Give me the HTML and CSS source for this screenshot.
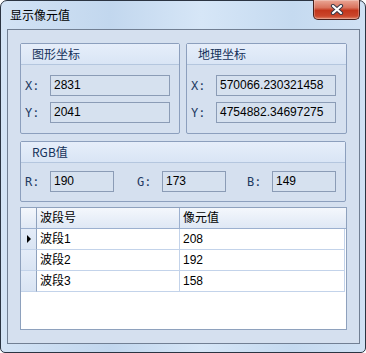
FILE: index.html
```html
<!DOCTYPE html>
<html>
<head>
<meta charset="utf-8">
<link rel="stylesheet" href="styles.css">
</head>
<body>
<div class="window">
  <div class="titlebar">
    <span class="title">显示像元值</span>
    <div class="close">
      <svg width="14" height="11" viewBox="0 0 14 11">
        <path d="M3 2 L11 9 M11 2 L3 9" stroke="#3a3a48" stroke-width="4.2" stroke-linecap="round"/>
        <path d="M3 2 L11 9 M11 2 L3 9" stroke="#ffffff" stroke-width="2.2" stroke-linecap="round"/>
      </svg>
    </div>
  </div>
  <div class="client">
    <div class="groups">
      <section class="group g-left">
        <div class="group-head">图形坐标</div>
        <div class="group-body">
          <div class="field"><span class="lbl">X:</span><div class="tb w120">2831</div></div>
          <div class="field"><span class="lbl">Y:</span><div class="tb w120">2041</div></div>
        </div>
      </section>
      <section class="group g-right">
        <div class="group-head">地理坐标</div>
        <div class="group-body">
          <div class="field"><span class="lbl">X:</span><div class="tb w120">570066.230321458</div></div>
          <div class="field"><span class="lbl">Y:</span><div class="tb w120">4754882.34697275</div></div>
        </div>
      </section>
    </div>
    <section class="group g-rgb">
      <div class="group-head">RGB值</div>
      <div class="group-body rgb-body">
        <div class="field"><span class="lbl">R:</span><div class="tb w64">190</div></div>
        <div class="field f-g"><span class="lbl">G:</span><div class="tb w64">173</div></div>
        <div class="field f-b"><span class="lbl">B:</span><div class="tb w64">149</div></div>
      </div>
    </section>
    <div class="grid">
      <div class="dg-row dg-head">
        <div class="c rh"></div>
        <div class="c">波段号</div>
        <div class="c last">像元值</div>
      </div>
      <div class="dg-row">
        <div class="c rh"><span class="arrow"></span></div>
        <div class="c">波段1</div>
        <div class="c last">208</div>
      </div>
      <div class="dg-row">
        <div class="c rh"></div>
        <div class="c">波段2</div>
        <div class="c last">192</div>
      </div>
      <div class="dg-row">
        <div class="c rh"></div>
        <div class="c">波段3</div>
        <div class="c last">158</div>
      </div>
    </div>
  </div>
</div>
</body>
</html>
```
FILE: styles.css
```css
* { box-sizing: border-box; }
html, body { margin: 0; padding: 0; }
body {
  width: 366px;
  height: 353px;
  font-family: "Liberation Sans", "Noto Sans CJK SC", sans-serif;
  font-size: 12px;
  background: #ffffff;
}
.window {
  width: 366px;
  height: 353px;
  border: 1px solid #2b3442;
  border-radius: 7px 7px 5px 5px;
  background: linear-gradient(90deg, #d3e3f5 0%, #c2d7ee 30%, #d6e6f7 55%, #c5daf0 80%, #d0e1f4 100%);
  display: flex;
  flex-direction: column;
  padding: 0 5px 8px 6px;
}
.titlebar {
  height: 28px;
  position: relative;
  display: flex;
  align-items: center;
  padding-left: 3px;
  padding-bottom: 2px;
}
.title {
  color: #000000;
  font-size: 12px;
  font-family: "Noto Sans CJK SC", sans-serif;
}
.close {
  position: absolute;
  top: -1px;
  right: 0px;
  width: 47px;
  height: 20px;
  border: 1px solid #48201c;
  border-top: none;
  border-radius: 0 0 5px 5px;
  background: linear-gradient(180deg, #eaa796 0%, #d9735d 40%, #c3361c 55%, #cb472c 85%, #e0876c 100%);
  display: flex;
  align-items: center;
  justify-content: center;
  box-shadow: inset 0 0 0 1px rgba(255,255,255,0.25);
}
.close svg { display: block; }
.client {
  flex: 1;
  border: 1px solid #717f93;
  background: #d5e0ef;
  padding: 13px 12px 0 12px;
  display: flex;
  flex-direction: column;
}
.groups {
  display: flex;
  gap: 6px;
}
.group {
  border: 1px solid #8c9fbd;
  border-radius: 2px;
  background: #d5e0ef;
}
.g-left { width: 160px; height: 91px; }
.g-right { width: 161px; height: 91px; }
.g-rgb { width: 326px; height: 61px; margin-top: 7px; }
.group-head {
  height: 21px;
  border-bottom: 1px solid #b4c6de;
  background: linear-gradient(180deg, #e6eefa 0%, #d9e5f5 100%);
  color: #15315a;
  font-family: "Noto Sans CJK SC", sans-serif;
  font-size: 12px;
  line-height: 20px;
  padding-left: 11px;
}
.group-body {
  padding: 10px 0 0 4px;
  display: flex;
  flex-direction: column;
  gap: 6px;
}
.rgb-body {
  flex-direction: row;
  gap: 0;
  padding-top: 8px;
}
.field {
  display: flex;
  align-items: center;
}
.f-g { margin-left: 23px; }
.f-b { margin-left: 21px; }
.lbl {
  width: 25px;
  color: #1e3a62;
  font-family: "DejaVu Sans Mono", monospace;
  font-size: 12px;
}
.tb {
  height: 21px;
  border: 1px solid #8b9cb6;
  background: #d6e1ef;
  color: #000000;
  padding-left: 3px;
  line-height: 19px;
  font-size: 12px;
  white-space: nowrap;
  overflow: hidden;
}
.w120 { width: 120px; }
.w64 { width: 64px; }
.grid {
  width: 327px;
  height: 123px;
  margin-top: 5px;
  border: 1px solid #8ea1bd;
  background: #ffffff;
}
.dg-row {
  display: grid;
  grid-template-columns: 16px 143px 1fr;
  height: 21px;
}
.c {
  border-right: 1px solid #c3d3ea;
  border-bottom: 1px solid #c3d3ea;
  padding-left: 3px;
  line-height: 20px;
  color: #000000;
  white-space: nowrap;
}
.c.last { border-right: 1px solid #c3d3ea; margin-right: 1px; }
.c.rh {
  padding: 0;
  background: linear-gradient(180deg, #e4ecf8 0%, #d9e4f3 100%);
  border-right: 1px solid #8ea1bd;
  border-bottom: 1px solid #c3d3ea;
  display: flex;
  align-items: center;
  justify-content: center;
}
.dg-head .c {
  background: linear-gradient(180deg, #f4f7fc 0%, #dfe8f5 100%);
  border-bottom: 1px solid #9cb0cf;
  border-right: 1px solid #9cb0cf;
}
.dg-head .c.last { border-right: none; margin-right: 0; }
.dg-head .c.rh { border-right: 1px solid #8ea1bd; }
.arrow {
  width: 0;
  height: 0;
  border-top: 4px solid transparent;
  border-bottom: 4px solid transparent;
  border-left: 4px solid #000000;
  margin-left: 1px;
}
```
